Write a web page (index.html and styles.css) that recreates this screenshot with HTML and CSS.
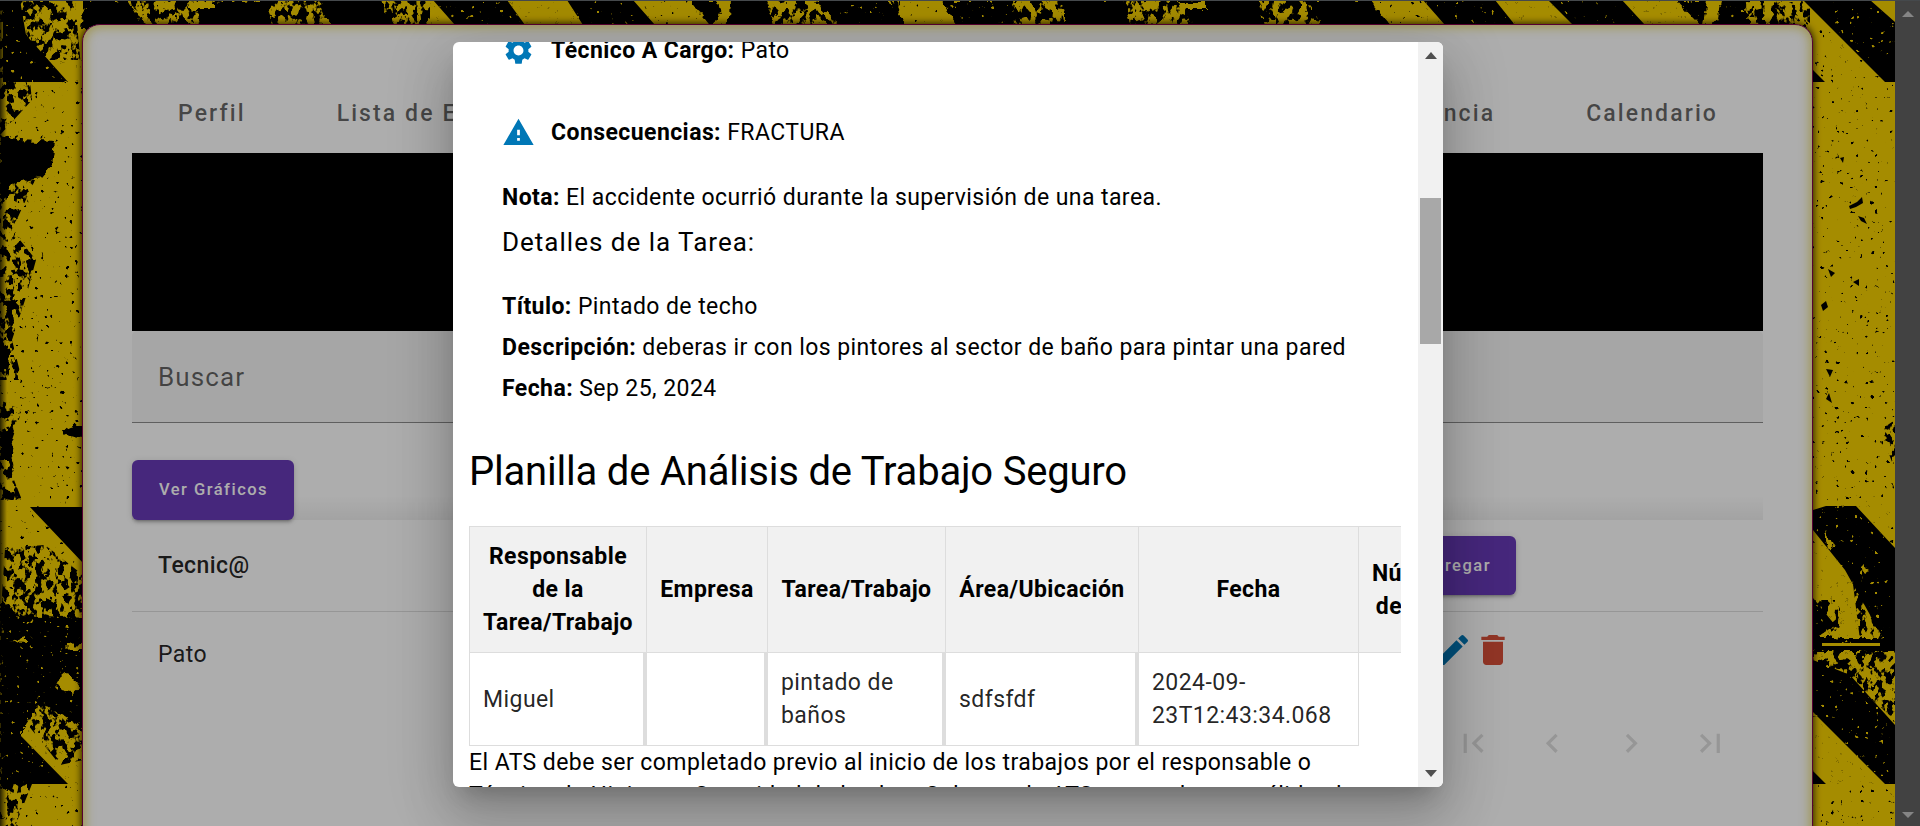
FILE: index.html
```
<!DOCTYPE html>
<html lang="es">
<head>
<meta charset="utf-8">
<title>Accidentes</title>
<link rel="stylesheet" href="styles.css">
</head>
<body>
<div class="window">
  <div class="page">
    <svg class="hazard" viewBox="0 0 1895 826" width="1895" height="826" aria-hidden="true">
      <defs>
        <filter id="rough" x="-5%" y="-5%" width="110%" height="110%">
          <feTurbulence type="fractalNoise" baseFrequency="0.15" numOctaves="2" seed="4" result="n"/>
          <feDisplacementMap in="SourceGraphic" in2="n" scale="9" xChannelSelector="R" yChannelSelector="G"/>
        </filter>
        <filter id="dense" filterUnits="userSpaceOnUse" x="0" y="0" width="1895" height="826">
          <feTurbulence type="fractalNoise" baseFrequency="0.14 0.1" numOctaves="3" seed="11"/>
          <feColorMatrix values="0 0 0 0 0  0 0 0 0 0  0 0 0 0 0  14 0 0 0 -6.8" result="n"/>
          <feComposite in="SourceGraphic" in2="n" operator="in"/>
        </filter>
        <filter id="sparse" filterUnits="userSpaceOnUse" x="0" y="0" width="1895" height="826">
          <feTurbulence type="fractalNoise" baseFrequency="0.2" numOctaves="2" seed="23"/>
          <feColorMatrix values="0 0 0 0 0  0 0 0 0 0  0 0 0 0 0  16 0 0 0 -11.5" result="n"/>
          <feComposite in="SourceGraphic" in2="n" operator="in"/>
        </filter>
        <linearGradient id="edge"><stop offset="0" stop-opacity=".75"/><stop offset="1" stop-opacity="0"/></linearGradient>
      </defs>
      <rect width="1895" height="826" fill="#f4ce00"/>
      <g fill="#000">
        <path d="M3 0H20L26 35L68 82H3ZM30 507H83V563ZM20 735L68 784H3V700ZM433 0H507L525 25H455ZM567 0H633L655 25H583ZM1423 0H1495L1515 25H1445ZM1548 0H1622L1645 25H1573ZM1803 0H1870L1895 22V82H1885L1833 30ZM1813 70L1825 82H1813ZM1813 510L1826 506H1856L1895 548V640H1884L1845 570L1813 530ZM1813 598L1835 625L1813 640ZM1813 660L1850 675L1895 725V784H1885L1813 712ZM1813 771L1826 784H1813Z"/>
        <g filter="url(#rough)">
          <path d="M85 0H128L145 28H80ZM197 2H265L275 28H200ZM318 0H380L390 28H335ZM690 0H765L775 28H712ZM815 0H888L908 28H842ZM940 0H1012L1016 28H960ZM1065 0H1125L1128 28H1065ZM1185 0H1258L1265 28H1192ZM1305 0H1370L1393 28H1325ZM1677 0H1745L1750 28H1702ZM0 135L20 140L55 142L52 165L40 178L10 184L0 210ZM0 335Q14 350 8 370H0ZM0 430L14 440L10 460H0ZM62 431Q74 423 83 427V438Q70 438 62 431ZM0 600L20 615L90 618V735L40 702L22 730V784H0ZM1813 638H1895V652H1813Z"/>
        </g>
        <path filter="url(#dense)" d="M0 0H75L83 90V0H430V25H83V60H30V82L32 100L0 135ZM0 180H35L12 230L36 260L25 300L12 340L22 380H0ZM0 400L22 410L12 440L14 480L22 500H0ZM5 548L45 545L83 575V625H0ZM20 715L40 700L83 735V760L60 765ZM0 784H32L15 826H0ZM755 0H900V25H755ZM1000 0H1370V25H1000ZM1740 0H1810V30H1740ZM1880 430L1895 420V470ZM1850 560L1895 580V670L1860 640ZM1813 650H1895V720L1850 680L1813 675ZM1813 600H1840V670H1813Z"/>
        <path filter="url(#sparse)" d="M0 0H83V826H0ZM83 0H1813V25H83ZM1813 30H1895V826H1813Z"/>
        <path d="M1849 206L1857 202L1862 197L1863 203L1856 207L1850 209ZM1858 216L1864 218L1867 224L1861 221ZM1828 269L1835 273L1831 277ZM1821 305L1826 301L1828 307L1823 311ZM1826 369L1833 370L1830 377ZM1826 399L1829 393L1832 403ZM1853 282L1859 279V286ZM1840 158L1844 157L1843 163Z"/>
      </g>
      <g fill="#f4ce00">
        <path filter="url(#rough)" d="M55 683L68 672L80 688L73 694ZM10 642L26 638V643ZM65 645L83 644V650H70ZM718 0H731L730 18L722 25H713L720 12ZM1708 0H1720L1718 18L1712 25H1704ZM186 2H216V9H190ZM1178 2H1206V9H1180ZM1824 530L1835 545L1828 549ZM1862 565L1870 570L1864 574Z"/>
        <path d="M1822 643H1880V646H1822Z"/>
        <path filter="url(#sparse)" d="M3 0H83V82H3ZM430 0H640V25H430ZM840 0H890V25H840ZM940 0H1010V25H940ZM1423 0H1750V25H1423ZM0 600H83V784H0ZM1815 500H1890V784H1815ZM1830 0H1895V60H1830Z"/>
      </g>
      <rect width="7" height="826" fill="url(#edge)"/>
    </svg>

    <main class="card">
      <nav class="tabs">
        <div class="tabs-group"><span>Perfil</span><span>Lista de E</span></div>
        <div class="tabs-group"><span>ncia</span><span>Calendario</span></div>
      </nav>
      <div class="banner"></div>
      <div class="search">Buscar</div>
      <div class="actions"><button class="btn btn-charts">Ver Gráficos</button></div>
      <div class="grid-head"><span>Tecnic@</span><button class="btn btn-add">Agregar</button></div>
      <div class="grid-row">
        <span>Pato</span>
        <div class="row-icons">
          <svg width="40" height="40" viewBox="0 0 24 24" fill="#0077b6"><path d="M3 17.25V21h3.75L17.81 9.94l-3.75-3.75L3 17.25zM20.71 7.04a1 1 0 0 0 0-1.41l-2.34-2.34a1 1 0 0 0-1.41 0l-1.83 1.83 3.75 3.75 1.83-1.83z"/></svg>
          <svg width="40" height="40" viewBox="0 0 24 24" fill="#d64f38"><path d="M6 19c0 1.1.9 2 2 2h8c1.1 0 2-.9 2-2V7H6v12zM19 4h-3.5l-1-1h-5l-1 1H5v2h14V4z"/></svg>
        </div>
      </div>
      <div class="pager">
        <svg viewBox="0 0 24 24"><path d="M18.41 16.59L13.82 12l4.59-4.59L17 6l-6 6 6 6zM6 6h2v12H6z"/></svg>
        <svg viewBox="0 0 24 24"><path d="M15.41 7.41L14 6l-6 6 6 6 1.41-1.41L10.83 12z"/></svg>
        <svg viewBox="0 0 24 24"><path d="M10 6L8.59 7.41 13.17 12l-4.58 4.59L10 18l6-6z"/></svg>
        <svg viewBox="0 0 24 24"><path d="M5.59 7.41L10.18 12l-4.59 4.59L7 18l6-6-6-6zM16 6h2v12h-2z"/></svg>
      </div>
    </main>

    <div class="overlay">
      <section class="dialog" role="dialog">
        <div class="dialog-body">
          <div class="info">
            <div class="icon-row">
              <svg width="33" height="33" viewBox="0 0 24 24"><path d="M19.14 12.94c.04-.3.06-.61.06-.94 0-.32-.02-.64-.07-.94l2.03-1.58c.18-.14.23-.41.12-.61l-1.92-3.32c-.12-.22-.37-.29-.59-.22l-2.39.96c-.5-.38-1.03-.7-1.62-.94l-.36-2.54c-.04-.24-.24-.41-.48-.41h-3.84c-.24 0-.43.17-.47.41l-.36 2.54c-.59.24-1.13.57-1.62.94l-2.39-.96c-.22-.08-.47 0-.59.22L2.74 8.87c-.12.21-.08.47.12.61l2.03 1.58c-.05.3-.09.63-.09.94s.02.64.07.94l-2.03 1.58c-.18.14-.23.41-.12.61l1.92 3.32c.12.22.37.29.59.22l2.39-.96c.5.38 1.03.7 1.62.94l.36 2.54c.05.24.24.41.48.41h3.84c.24 0 .44-.17.47-.41l.36-2.54c.59-.24 1.13-.56 1.62-.94l2.39.96c.22.08.47 0 .59-.22l1.92-3.32c.12-.22.07-.47-.12-.61l-2.01-1.58zM12 15.6c-1.98 0-3.6-1.62-3.6-3.6s1.62-3.6 3.6-3.6 3.6 1.62 3.6 3.6-1.62 3.6-3.6 3.6z"/></svg>
              <span><b>Técnico A Cargo:</b> Pato</span>
            </div>
            <div class="icon-row">
              <svg width="33" height="33" viewBox="0 0 24 24"><path d="M1 21h22L12 2 1 21zm12-3h-2v-2h2v2zm0-4h-2v-4h2v4z"/></svg>
              <span><b>Consecuencias:</b> FRACTURA</span>
            </div>
            <p class="note"><b>Nota:</b> El accidente ocurrió durante la supervisión de una tarea.</p>
            <h3 class="subtitle">Detalles de la Tarea:</h3>
            <p class="line"><b>Título:</b> Pintado de techo</p>
            <p class="line"><b>Descripción:</b> deberas ir con los pintores al sector de baño para pintar una pared</p>
            <p class="line"><b>Fecha:</b> Sep 25, 2024</p>
          </div>
          <h2 class="title">Planilla de Análisis de Trabajo Seguro</h2>
          <div class="sheet">
            <div class="sheet-row sheet-head">
              <div>Responsable<br>de la<br>Tarea/Trabajo</div><div>Empresa</div><div>Tarea/Trabajo</div><div>Área/Ubicación</div><div>Fecha</div><div>Número<br>de ART</div>
            </div>
            <div class="sheet-row sheet-data">
              <div>Miguel</div><div></div><div>pintado de<br>baños</div><div>sdfsfdf</div><div>2024-09-<br>23T12:43:34.068</div>
            </div>
          </div>
          <p class="footnote">El ATS debe ser completado previo al inicio de los trabajos por el responsable o<br>Técnico de Higiene y Seguridad de la obra. Sobre cada ATS responder por válido el</p>
        </div>
        <div class="scrollbar">
          <svg width="12" height="7" viewBox="0 0 12 7"><path d="M0 7L6 0L12 7Z"/></svg>
          <div class="thumb"></div>
          <svg width="12" height="7" viewBox="0 0 12 7"><path d="M0 0H12L6 7Z"/></svg>
        </div>
      </section>
    </div>
  </div>
  <div class="page-scroll">
    <svg width="12" height="6" viewBox="0 0 12 6"><path d="M0 6L6 0L12 6Z"/></svg>
    <svg width="12" height="6" viewBox="0 0 12 6"><path d="M0 0H12L6 6Z"/></svg>
  </div>
</div>
</body>
</html>
```

FILE: styles.css
```
* { box-sizing: border-box; }
body { margin: 0; font-family: Roboto, "Liberation Sans", sans-serif; font-size: 23px; line-height: 33px; letter-spacing: .43px; color: #000; }
p, h2, h3 { margin: 0; font-weight: 400; }
svg { display: block; flex: none; }

.window { display: flex; width: 1920px; height: 826px; overflow: hidden; border-top: 1px solid #45494c; }
.page { position: relative; width: 1895px; height: 825px; overflow: hidden; padding: 23px 82px 0; }
.hazard { position: absolute; left: 0; top: -1px; }
.page-scroll { width: 25px; background: #424242; display: flex; flex-direction: column; justify-content: space-between; align-items: center; padding: 10px 0 8px; }
.page-scroll svg { fill: #858585; }

.card { position: relative; height: 860px; padding: 51px 49px 0; background: #fff; border: 1px solid #80004a; border-radius: 18px; box-shadow: inset 0 0 11px 2px rgba(225, 205, 60, .75), 0 0 7px 1px rgba(0, 0, 0, .75); }
.tabs { display: flex; justify-content: space-between; height: 77px; padding: 0 45px 2px 46px; align-items: center; color: rgba(0, 0, 0, .6); font-weight: 500; letter-spacing: 2.1px; }
.tabs-group { display: flex; gap: 91px; }
.banner { height: 178px; background: #000; }
.search { height: 92px; padding: 30px 26px; background: #f5f5f5; border-bottom: 1px solid #8c8c8c; border-radius: 5px 5px 0 0; color: rgba(0, 0, 0, .6); font-size: 26px; letter-spacing: 1.1px; }
.actions { height: 97px; padding-top: 37px; background: linear-gradient(to top, rgba(0, 0, 0, .06), rgba(0, 0, 0, 0) 24px); }
.btn { display: block; height: 60px; padding: 0 25px 0 26px; border: 0; border-radius: 6px; background: #673ab7; color: #fff; font: 500 16.5px/60px Roboto, sans-serif; letter-spacing: 1.5px; white-space: nowrap; box-shadow: 0 4px 2px -3px rgba(0, 0, 0, .2), 0 3px 3px rgba(0, 0, 0, .14), 0 1px 7px rgba(0, 0, 0, .12); }
.btn-charts { position: relative; z-index: 1; width: 162px; }
.btn-add { height: 59px; }
.grid-head { display: flex; justify-content: space-between; height: 92px; padding: 16px 247px 0 26px; border-bottom: 1px solid #dedede; background: #fff; font-weight: 500; color: rgba(0, 0, 0, .87); }
.grid-head span { padding-top: 13px; }
.grid-row { display: flex; justify-content: space-between; height: 112px; padding: 18px 250px 0 26px; color: rgba(0, 0, 0, .87); }
.grid-row > span { padding-top: 8px; }
.row-icons { display: flex; }
.pager { display: flex; justify-content: flex-end; gap: 40.5px; padding-right: 34px; }
.pager svg { width: 38.5px; height: 38.5px; fill: #dedede; }

.overlay { position: absolute; z-index: 2; inset: 0; background: rgba(0, 0, 0, .32); padding: 41px 452px 0 453px; }
.dialog { display: flex; width: 990px; height: 745px; overflow: hidden; border-radius: 6px; background: #fff; box-shadow: 0 15px 21px -10px rgba(0, 0, 0, .2), 0 33px 52px 4px rgba(0, 0, 0, .14), 0 12px 63px 11px rgba(0, 0, 0, .12); }
.dialog-body { width: 965px; overflow: hidden; padding: 0 17px 0 16px; }
.info { margin-top: -8px; padding-left: 33px; }
.icon-row { display: flex; gap: 16px; height: 33px; margin-bottom: 49px; }
.icon-row svg { fill: #0077b6; }
.icon-row + .icon-row { margin-bottom: 32px; }
b { font-weight: 700; }
.subtitle { font-size: 26px; line-height: 41px; height: 68px; padding-top: 8px; letter-spacing: 1px; }
.line { white-space: nowrap; margin-top: 8px; }
.note { height: 33px; }
.title { font-size: 40px; line-height: 50px; padding-top: 42px; height: 121px; letter-spacing: -.2px; white-space: nowrap; }
.sheet { overflow: hidden; }
.sheet-row { display: grid; grid-template-columns: 177px 121px 178px 193px 220px 112px; width: 1001px; }
.sheet-row > div { display: flex; align-items: center; border: 0 solid #ddd; border-left-width: 1px; padding: 0 13px; }
.sheet-head { height: 127px; background: #f1f1f1; border: solid #ddd; border-width: 1px 0; font-weight: 700; }
.sheet-head > div { justify-content: center; text-align: center; padding: 0; }
.sheet-data { height: 93px; color: rgba(0, 0, 0, .87); }
.sheet-data > div { border-bottom-width: 1px; border-right-width: 3px; }
.sheet-data > div:nth-child(5) { border-right-width: 1px; width: 221px; }
.footnote { white-space: nowrap; }
.scrollbar { width: 25px; background: #f1f1f1; display: flex; flex-direction: column; align-items: center; padding: 10px 0 10px; }
.scrollbar svg { fill: #505050; }
.thumb { width: 21px; height: 146px; margin: 139px 0 auto; background: #a8a8a8; }
```
